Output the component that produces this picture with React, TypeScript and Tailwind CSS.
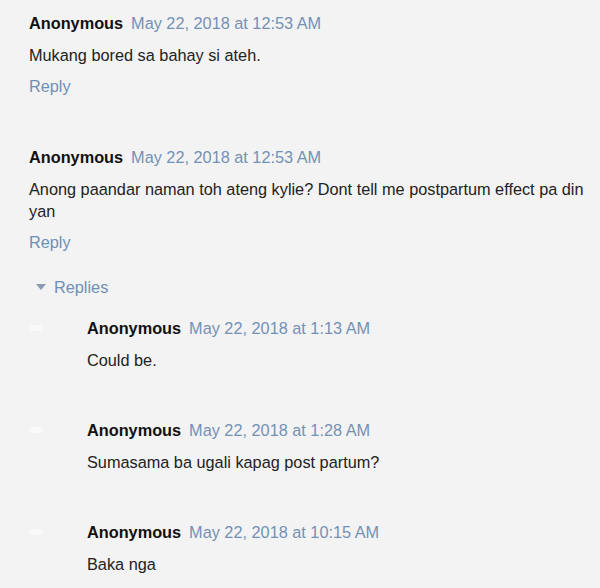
import React from 'react'

interface CommentData {
  date: string
  lines: string
}

const TOP: CommentData[] = [
  { date: 'May 22, 2018 at 12:53 AM', lines: 'Mukang bored sa bahay si ateh.' },
  {
    date: 'May 22, 2018 at 12:53 AM',
    lines: 'Anong paandar naman toh ateng kylie? Dont tell me postpartum effect pa din yan',
  },
]

const NESTED: CommentData[] = [
  { date: 'May 22, 2018 at 1:13 AM', lines: 'Could be.' },
  { date: 'May 22, 2018 at 1:28 AM', lines: 'Sumasama ba ugali kapag post partum?' },
  { date: 'May 22, 2018 at 10:15 AM', lines: 'Baka nga' },
]

function Header({ date }: { date: string }): React.ReactElement {
  return (
    <div className="flex items-baseline leading-[22px] whitespace-nowrap">
      <span className="font-bold text-[#111]">Anonymous</span>
      <span className="ml-[8px] text-[#7391b6]">{date}</span>
    </div>
  )
}

function Comment({ c, reply }: { c: CommentData; reply: boolean }): React.ReactElement {
  return (
    <div className="flex flex-col">
      <Header date={c.date} />
      <p className="mt-[10px] leading-[22px] text-[#222] pr-1">{c.lines}</p>
      {reply && (
        <a className="mt-[9px] leading-[22px] text-[#6f8fb6] cursor-pointer">Reply</a>
      )}
    </div>
  )
}

export default function App(): React.ReactElement {
  return (
    <div
      className="w-[600px] h-[588px] overflow-hidden bg-[#f3f3f3] text-[16.3px]"
      style={{ fontFamily: '"Liberation Sans", Arial, sans-serif' }}
    >
      <div className="pl-[29px] pt-[12px] flex flex-col">
        <Comment c={TOP[0]} reply />
        <div className="mt-[49px]">
          <Comment c={TOP[1]} reply />
        </div>

        {/* Replies toggle */}
        <div className="mt-[23px] ml-[7px] flex items-center leading-[22px] text-[#6f8fb6]">
          <svg width="10" height="6" viewBox="0 0 10 6" aria-hidden="true">
            <polygon points="0,0 10,0 5,6" fill="#8a9bb0" />
          </svg>
          <span className="ml-[8px]">Replies</span>
        </div>

        {/* Nested replies */}
        <div className="mt-[19px] flex flex-col gap-[48px]">
          {NESTED.map((c, i) => (
            <div key={i} className="flex">
              <div className="w-[58px] shrink-0 pt-[8px]">
                <div className="w-[14px] h-[6px] bg-white/50 rounded-sm" />
              </div>
              <Comment c={c} reply={false} />
            </div>
          ))}
        </div>
      </div>
    </div>
  )
}
